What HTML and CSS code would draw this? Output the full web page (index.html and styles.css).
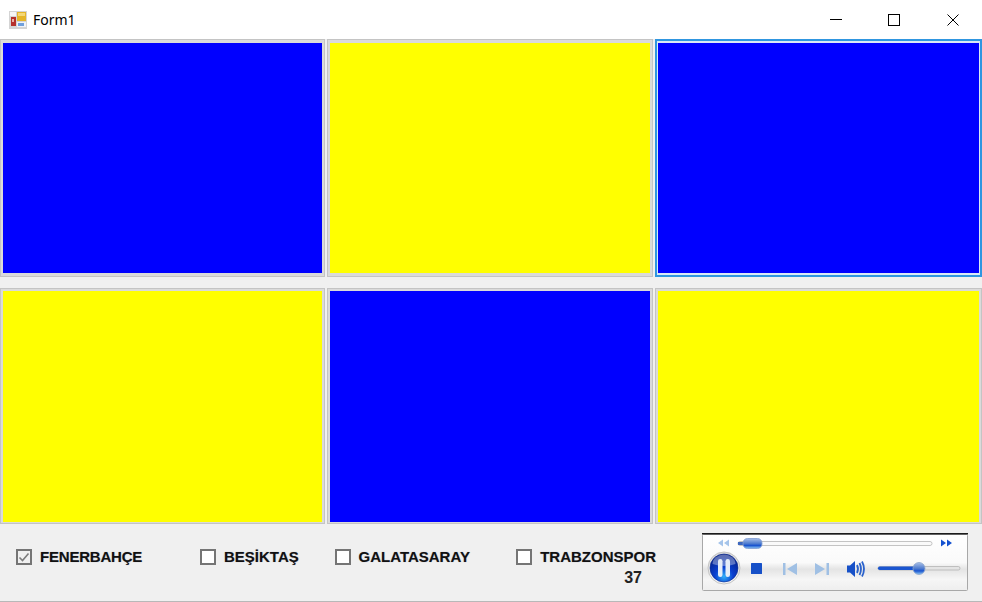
FILE: index.html
```html
<!DOCTYPE html>
<html lang="en">
<head>
    <meta charset="UTF-8">
    <meta name="viewport" content="width=device-width, initial-scale=1.0">
    <title>Form1</title>
    <link rel="stylesheet" href="styles.css">
</head>
<body>
    <header class="titlebar">
        <svg class="app-icon" width="18" height="18" viewBox="0 0 18 18">
            <rect x="0" y="0" width="18" height="18" fill="#d4d4d4"/>
            <rect x="1" y="1" width="6" height="4" fill="#f6f6f6"/>
            <rect x="2" y="6" width="5" height="9" fill="#b5302c"/>
            <rect x="3" y="8" width="2" height="3" fill="#e8b0a8"/>
            <rect x="8" y="1" width="9" height="9" fill="#e5b52a"/>
            <rect x="9" y="2" width="7" height="3" fill="#f4d878"/>
            <rect x="8" y="11" width="9" height="5" fill="#eef2f8"/>
            <rect x="9" y="12" width="6" height="3" fill="#6f9fdc"/>
        </svg>
        <span class="title">Form1</span>
        <div class="window-buttons">
            <button class="win-btn" type="button" aria-label="Minimize">
                <svg width="12" height="12" viewBox="0 0 12 12"><path d="M0 5.5H12" stroke="#000" fill="none"/></svg>
            </button>
            <button class="win-btn" type="button" aria-label="Maximize">
                <svg width="12" height="12" viewBox="0 0 12 12"><rect x="0.5" y="0.5" width="11" height="11" stroke="#000" fill="none"/></svg>
            </button>
            <button class="win-btn" type="button" aria-label="Close">
                <svg width="12" height="12" viewBox="0 0 12 12"><path d="M0.5 0.5L11.5 11.5M11.5 0.5L0.5 11.5" stroke="#000" fill="none"/></svg>
            </button>
        </div>
    </header>

    <main class="board">
        <div class="panel"><div class="fill blue"></div></div>
        <div class="panel"><div class="fill yellow"></div></div>
        <div class="panel focused"><div class="fill blue"></div></div>
        <div class="panel lower"><div class="fill yellow"></div></div>
        <div class="panel lower"><div class="fill blue"></div></div>
        <div class="panel lower"><div class="fill yellow"></div></div>
    </main>

    <footer class="controls">
        <label class="check first">
            <span class="box checked">
                <svg width="12" height="12" viewBox="0 0 12 12"><path d="M1.5 6.5L4.5 9.5L10.5 2.5" stroke="#7c7c7c" stroke-width="1.6" fill="none"/></svg>
            </span>
            FENERBAHÇE
        </label>
        <label class="check second"><span class="box"></span>BEŞİKTAŞ</label>
        <label class="check third"><span class="box"></span>GALATASARAY</label>
        <div class="last-team">
            <label class="check"><span class="box"></span>TRABZONSPOR</label>
            <span class="score">37</span>
        </div>

        <svg class="player" width="266" height="58" viewBox="0 0 266 58">
            <defs>
                <linearGradient id="skin" x1="0" y1="0" x2="0" y2="1">
                    <stop offset="0" stop-color="#ffffff"/>
                    <stop offset="0.5" stop-color="#fafafa"/>
                    <stop offset="0.62" stop-color="#e4e4e4"/>
                    <stop offset="0.8" stop-color="#f6f6f6"/>
                    <stop offset="1" stop-color="#eeeeee"/>
                </linearGradient>
                <linearGradient id="thumb" x1="0" y1="0" x2="0" y2="1">
                    <stop offset="0" stop-color="#a8bfe8"/>
                    <stop offset="0.5" stop-color="#4f7ccf"/>
                    <stop offset="0.7" stop-color="#1a55d0"/>
                    <stop offset="1" stop-color="#8fc8f4"/>
                </linearGradient>
                <radialGradient id="orb" cx="0.5" cy="0.8" r="0.8">
                    <stop offset="0" stop-color="#30b0fa"/>
                    <stop offset="0.4" stop-color="#0a3fd0"/>
                    <stop offset="1" stop-color="#041c80"/>
                </radialGradient>
                <linearGradient id="ring" x1="0" y1="0" x2="0" y2="1">
                    <stop offset="0" stop-color="#d8d8d8"/>
                    <stop offset="1" stop-color="#f6f6f6"/>
                </linearGradient>
            </defs>
            <rect x="0.5" y="1.5" width="265" height="56" rx="1" fill="url(#skin)" stroke="#a8a8a8"/>
            <path d="M0 0.75H266" stroke="#1c1c1c" stroke-width="1.5"/>

            <path d="M21 6.5L16 10L21 13.5ZM27 6.5L22 10L27 13.5Z" fill="#a5c4ea"/>
            <rect x="36" y="8.5" width="194" height="4" rx="2" fill="#fafafa" stroke="#c4c4c4"/>
            <rect x="36" y="9" width="10" height="3" fill="#3c68c0"/>
            <rect x="41" y="5.5" width="19" height="10" rx="4.5" fill="url(#thumb)" stroke="#7f9ad0" stroke-width="0.8"/>
            <path d="M239 6.5L244 10L239 13.5ZM245 6.5L250 10L245 13.5Z" fill="#1552d0"/>

            <circle cx="22" cy="35" r="16" fill="url(#ring)" stroke="#c4c4c4"/>
            <circle cx="22" cy="35" r="14" fill="url(#orb)" stroke="#0a2a90" stroke-width="0.6"/>
            <path d="M10.5 31A11.5 9.5 0 0 1 33.5 31A22 13 0 0 1 10.5 31Z" fill="#ffffff" fill-opacity="0.35"/>
            <rect x="16" y="26" width="4.5" height="18" rx="2.2" fill="#e6edf8"/>
            <rect x="23.500" y="26" width="4.5" height="18" rx="2.2" fill="#e6edf8"/>

            <rect x="49" y="30" width="11" height="11" rx="0.5" fill="#1650c8"/>

            <rect x="81" y="30" width="2.5" height="12" fill="#a0c0e4"/>
            <path d="M95 30V42L85 36Z" fill="#a0c0e4"/>
            <rect x="124.5" y="30" width="2.5" height="12" fill="#a0c0e4"/>
            <path d="M113 30V42L123 36Z" fill="#a0c0e4"/>

            <path d="M145 32.5H148L153 28V44L148 39.5H145Z" fill="#1650c8"/>
            <path d="M155 32Q157 36 155 40M157.5 30Q160.5 36 157.5 42M160 28.500Q164 36 160 43.500" stroke="#2a62cc" stroke-width="1.8" fill="none"/>

            <rect x="176" y="33.5" width="82" height="3.5" rx="1.7" fill="#e4e4e4" stroke="#b4b4b4" stroke-width="0.8"/>
            <rect x="176" y="33.5" width="42" height="3.5" rx="1.7" fill="#1a55d0"/>
            <circle cx="217" cy="35.5" r="6" fill="url(#thumb)" stroke="#8aa4cc" stroke-width="0.8"/>
        </svg>
    </footer>
</body>
</html>
```

FILE: styles.css
```css
body {
    margin: 0;
    height: 602px;
    overflow: hidden;
    background-color: #f0f0f0;
    font-family: "Liberation Sans", Arial, sans-serif;
    color: #000;
}

.titlebar {
    display: flex;
    align-items: center;
    height: 39px;
    padding-left: 9px;
    background: white;
    box-sizing: border-box;
}

.app-icon {
    margin-right: 6px;
}

.title {
    font-family: "Noto Sans", sans-serif;
    font-size: 14px;
}

.window-buttons {
    display: flex;
    margin-left: auto;
    height: 100%;
}

.win-btn {
    display: flex;
    align-items: center;
    justify-content: center;
    width: 58.5px;
    padding: 0;
    border: none;
    background: none;
}

.board {
    display: grid;
    grid-template-columns: 325px 326px 327px;
    grid-template-rows: 238px 236px;
    column-gap: 2px;
    row-gap: 11px;
}

.panel {
    display: flex;
    padding: 3px 2px;
    border: 1px solid #c4c4c4;
    background: #dadada;
}

.lower {
    padding: 2px 2px 1px;
}

.fill {
    flex: 1;
}

.blue {
    background: #0000ff;
}

.yellow {
    background: #ffff00;
}

.focused {
    border-color: #2f96e0;
    background: #d8e8f6;
    box-shadow: inset 0 0 0 1px #2f96e0;
}

.controls {
    display: flex;
    align-items: flex-start;
    height: 78px;
    padding: 24px 0 0 16px;
    border-bottom: 1px solid #b8b8b8;
    box-sizing: border-box;
}

.check {
    display: flex;
    align-items: center;
    height: 17px;
    font-size: 15px;
    font-weight: bold;
    color: #111;
    white-space: nowrap;
    text-shadow: 0 0 1px rgba(0, 0, 60, 0.35);
}

.first {
    width: 184px;
    letter-spacing: -0.2px;
}

.second {
    width: 134.5px;
}

.third {
    width: 181.5px;
}

.box {
    display: flex;
    align-items: center;
    justify-content: center;
    width: 16px;
    height: 16px;
    margin-right: 8px;
    border: 2px solid #757575;
    background: white;
    box-sizing: border-box;
}

.checked {
    background: #f0f0f0;
}

.last-team {
    display: flex;
    flex-direction: column;
    align-items: flex-end;
    width: 186px;
    padding-right: 46px;
    box-sizing: border-box;
}

.score {
    margin-top: 4px;
    padding-right: 14px;
    font-size: 16px;
    font-weight: bold;
    color: #222;
}

.player {
    display: block;
    margin-top: -15px;
    filter: blur(0.35px);
}
```
